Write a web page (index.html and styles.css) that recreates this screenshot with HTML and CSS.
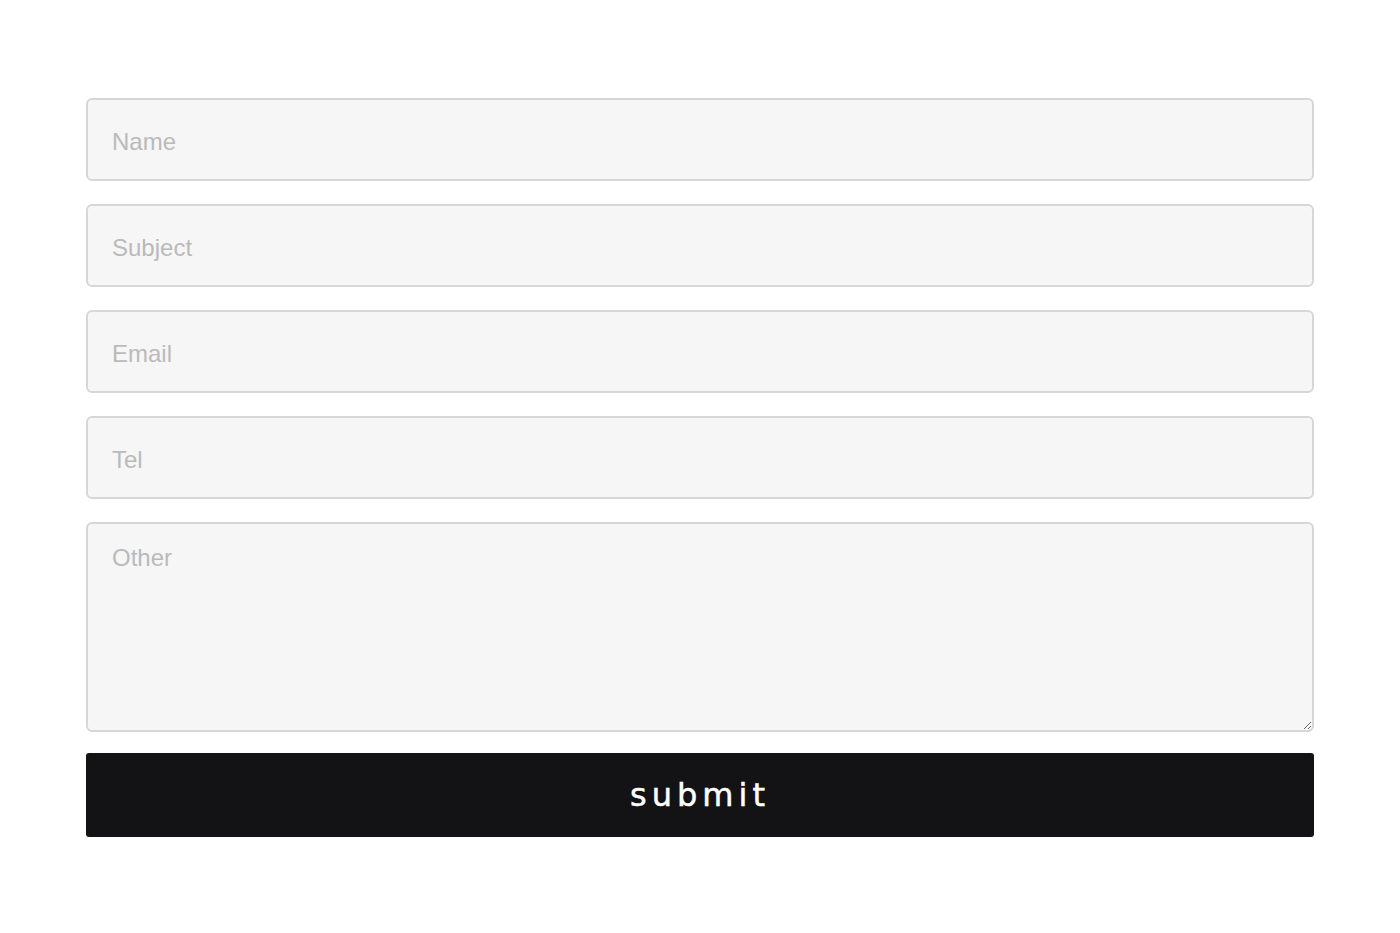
FILE: index.html
```html
<!DOCTYPE html>
<html lang="en">
<head>
<meta charset="utf-8">
<title>Contact form</title>
<link rel="stylesheet" href="styles.css">
</head>
<body>
<form class="contact-form">
  <input class="field" type="text" placeholder="Name">
  <input class="field" type="text" placeholder="Subject">
  <input class="field" type="email" placeholder="Email">
  <input class="field" type="tel" placeholder="Tel">
  <textarea class="field field-area" placeholder="Other"></textarea>
  <button class="submit" type="button">submit</button>
</form>
</body>
</html>
```

FILE: styles.css
```css
html, body {
  margin: 0;
  padding: 0;
  background: #ffffff;
}

.contact-form {
  display: flex;
  flex-direction: column;
  gap: 23px;
  padding: 98px 86px 0 86px;
}

.field {
  box-sizing: border-box;
  display: block;
  width: 100%;
  height: 83px;
  margin: 0;
  padding: 4px 24px 0 24px;
  border: 2px solid #d7d7d7;
  border-radius: 6px;
  background: #f6f6f6;
  font-family: "Liberation Sans", Arial, sans-serif;
  font-size: 24px;
  color: #333;
  outline: none;
}

.field::placeholder {
  color: #bababa;
}

.field-area {
  height: 210px;
  padding: 19px 24px;
  line-height: 29px;
  resize: vertical;
}

.submit {
  display: block;
  width: 100%;
  height: 84px;
  margin: -2px 0 0 0;
  border: none;
  border-radius: 3px;
  background: #131315;
  color: #ffffff;
  font-family: "DejaVu Sans", sans-serif;
  font-size: 32px;
  letter-spacing: 5px;
  -webkit-text-stroke: 0.5px #ffffff;
  padding: 0;
  cursor: pointer;
}
```
